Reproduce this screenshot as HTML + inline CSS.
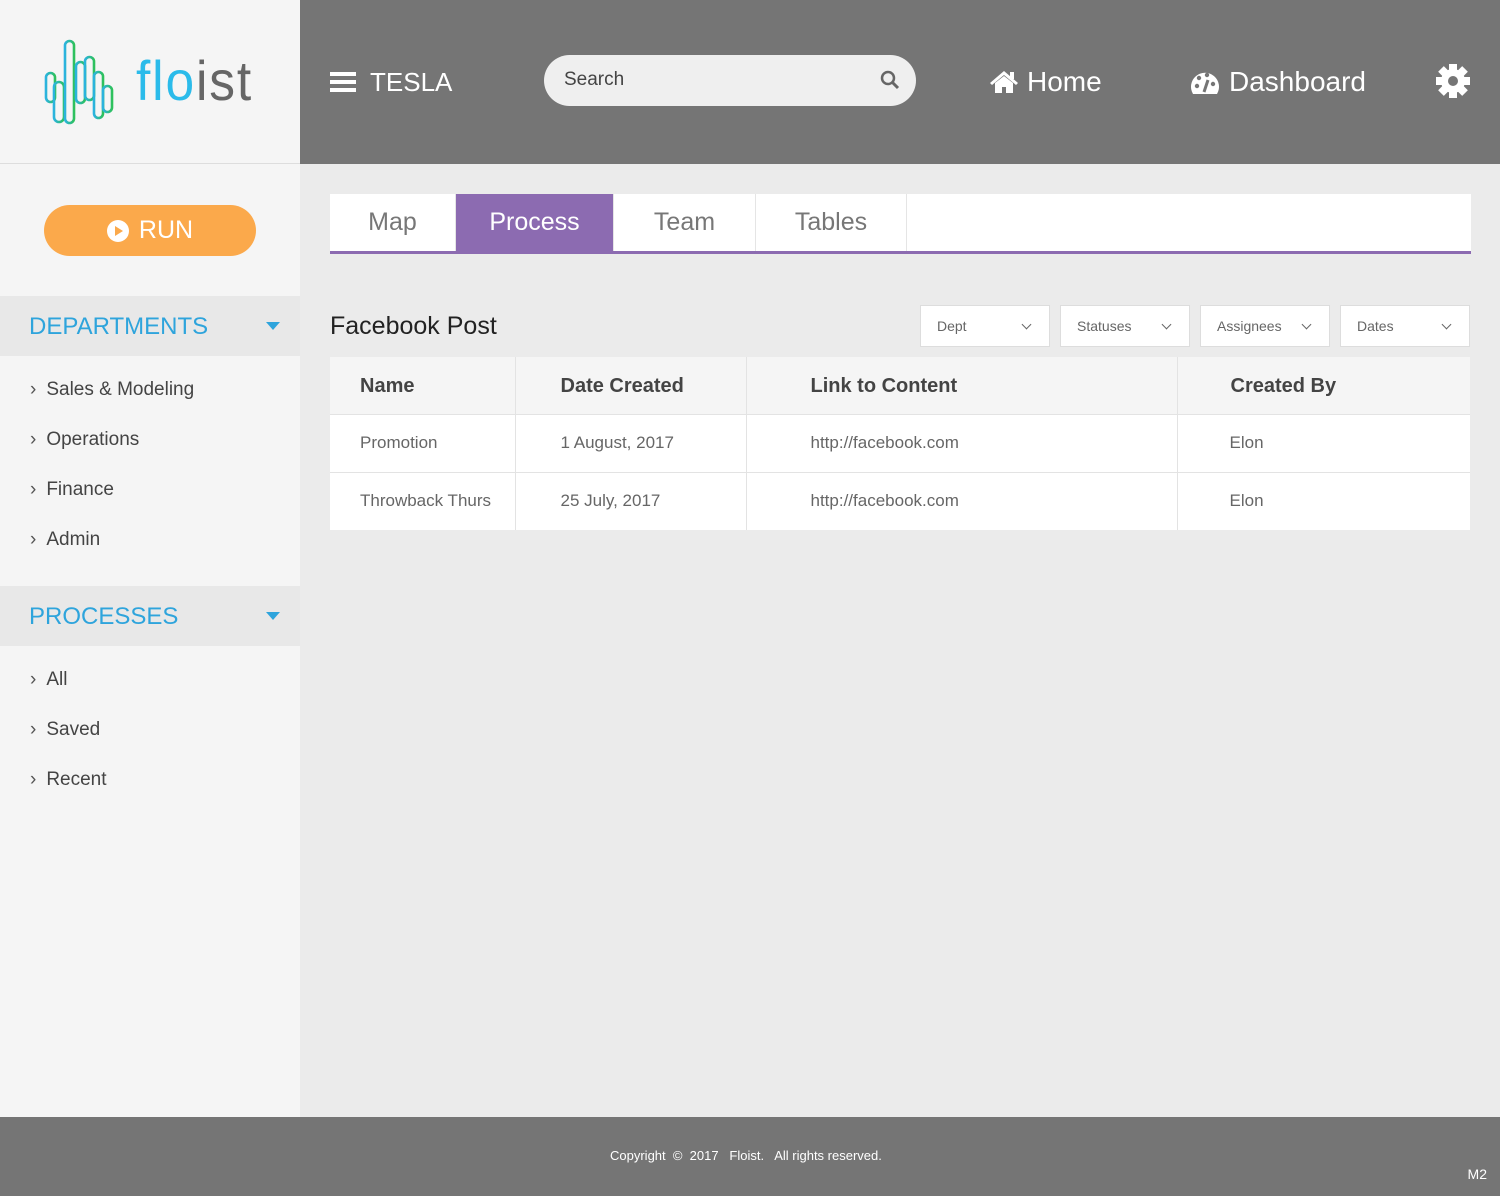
<!DOCTYPE html>
<html><head><meta charset="utf-8"><style>
*{box-sizing:border-box;margin:0;padding:0}
body{width:1500px;height:1196px;background:#ebebeb;font-family:"Liberation Sans","DejaVu Sans",sans-serif;position:relative;overflow:hidden}
.side{position:absolute;left:0;top:0;width:300px;height:1117px;background:#f5f5f5}
.logo{height:164px;border-bottom:1px solid #ddd;position:relative}
.top{position:absolute;left:300px;top:0;width:1200px;height:164px;background:#757575;color:#fff}
.run{position:absolute;left:44px;top:205px;width:212px;height:51px;border-radius:26px;background:#fba94b;color:#fff;font-size:25px;display:flex;align-items:center;justify-content:center;gap:10px}
.sec{position:absolute;left:0;width:300px;height:60px;background:#e8e8e8;color:#2ea4dc;font-size:24px;padding:17px 29px}
.sec:after{content:"";position:absolute;right:20px;top:26px;border:7px solid transparent;border-top:8px solid #2ea4dc;border-bottom:0}
.item{position:absolute;left:30px;font-size:19px;color:#444}
.item:before{content:"›";margin-right:10px;color:#555}
.tabs{position:absolute;left:330px;top:194px;width:1141px;height:60px;background:#fff;border-bottom:3px solid #8c6bb1;display:flex}
.tab{font-size:25px;color:#777;display:flex;align-items:center;justify-content:center;border-right:1px solid #e5e5e5}
.tab.a{background:#8c6bb1;color:#fff}
.dd{position:absolute;top:305px;width:130px;height:42px;background:#fff;border:1px solid #ddd;font-size:14px;color:#666;padding:12px 16px}
.dd:after{content:"";position:absolute;right:19px;top:15px;width:6px;height:6px;border-right:1.5px solid #666;border-bottom:1.5px solid #666;transform:rotate(45deg)}
table{position:absolute;left:330px;top:357px;width:1140px;border-collapse:collapse;background:#fff}
td,th{text-align:left;border-right:1px solid #e3e3e3;font-weight:normal}
th{height:57px;background:#f5f5f5;font-size:20px;color:#444;font-weight:bold;padding-top:2px}
td{height:58px;font-size:17px;color:#666;border-top:1px solid #e3e3e3}
.foot{position:absolute;left:0;top:1117px;width:1500px;height:79px;background:#757575;color:#fff;font-size:13px}
</style></head><body>
<div class="side"><div class="logo">
<svg width="80" height="95" style="position:absolute;left:40px;top:35px" fill="none" stroke-width="2.6">
<defs><linearGradient id="g" x1="0" x2="1" y1="0" y2="0"><stop offset="0" stop-color="#2bb3e0"/><stop offset="1" stop-color="#2ec15a"/></linearGradient></defs>
<g stroke="url(#g)">
<rect x="6" y="38" width="9" height="29" rx="4.5"/>
<rect x="14" y="47" width="10" height="40" rx="5"/>
<rect x="25" y="6" width="9" height="82" rx="4.5"/>
<rect x="36" y="27" width="9" height="41" rx="4.5"/>
<rect x="45" y="22" width="9" height="43" rx="4.5"/>
<rect x="54" y="37" width="9" height="46" rx="4.5"/>
<rect x="63" y="51" width="9" height="26" rx="4.5"/>
</g></svg>
<div style="position:absolute;left:136px;top:48px;font-size:56px;letter-spacing:2px;transform:scaleX(0.92);transform-origin:left"><span style="color:#2bbbea">flo</span><span style="color:#666">ist</span></div>
</div></div>
<div class="top">
<div style="position:absolute;left:30px;top:72px;width:26px;height:20px;border-top:4px solid #fff;border-bottom:4px solid #fff"><div style="margin-top:4px;height:4px;background:#fff"></div></div>
<div style="position:absolute;left:70px;top:67px;font-size:26px">TESLA</div>
<div style="position:absolute;left:244px;top:55px;width:372px;height:51px;border-radius:26px;background:#efefef;color:#444;font-size:19px;padding:14px 20px">Search
<svg width="20" height="20" style="position:absolute;right:16px;top:15px"><circle cx="8" cy="8" r="6" stroke="#666" stroke-width="2.5" fill="none"/><path d="M12 12l6 6" stroke="#666" stroke-width="3"/></svg></div>
<svg width="28" height="24" style="position:absolute;left:690px;top:70px" fill="#fff"><path d="M14 1L0 13l2 2 12-10 12 10 2-2z M5 13v10h7v-6h4v6h7V13L14 6z"/><rect x="20" y="2" width="4" height="7"/></svg>
<div style="position:absolute;left:727px;top:66px;font-size:28px">Home</div>
<svg width="32" height="28" style="position:absolute;left:889px;top:69px"><path d="M4 25A14 14 0 1 1 28 25z" fill="#fff"/><circle cx="8" cy="17" r="2.2" fill="#757575"/><circle cx="10" cy="9" r="2.2" fill="#757575"/><circle cx="18" cy="6" r="2.2" fill="#757575"/><circle cx="24" cy="15" r="2.2" fill="#757575"/><path d="M15 23l4-12" stroke="#757575" stroke-width="3"/></svg>
<div style="position:absolute;left:929px;top:66px;font-size:28px">Dashboard</div>
<svg width="36" height="36" style="position:absolute;left:1135px;top:63px" viewBox="0 0 36 36"><g fill="#fff" transform="translate(18 18)"><circle r="12"/><rect x="-4" y="-17" width="8" height="34"/><rect x="-4" y="-17" width="8" height="34" transform="rotate(45)"/><rect x="-4" y="-17" width="8" height="34" transform="rotate(90)"/><rect x="-4" y="-17" width="8" height="34" transform="rotate(135)"/></g><circle cx="18" cy="18" r="5" fill="#757575"/></svg>
</div>
<div class="run"><svg width="22" height="22"><circle cx="11" cy="11" r="11" fill="#fff"/><path d="M8 6l8 5-8 5z" fill="#fba94b"/></svg>RUN</div>
<div class="sec" style="top:296px">DEPARTMENTS</div>
<div class="item" style="top:379px">Sales &amp; Modeling</div>
<div class="item" style="top:429px">Operations</div>
<div class="item" style="top:479px">Finance</div>
<div class="item" style="top:529px">Admin</div>
<div class="sec" style="top:586px">PROCESSES</div>
<div class="item" style="top:669px">All</div>
<div class="item" style="top:719px">Saved</div>
<div class="item" style="top:769px">Recent</div>
<div class="tabs"><div class="tab" style="width:126px">Map</div><div class="tab a" style="width:158px">Process</div><div class="tab" style="width:142px">Team</div><div class="tab" style="width:151px">Tables</div></div>
<div style="position:absolute;left:330px;top:312px;font-size:25px;color:#222">Facebook Post</div>
<div class="dd" style="left:920px">Dept</div><div class="dd" style="left:1060px">Statuses</div><div class="dd" style="left:1200px">Assignees</div><div class="dd" style="left:1340px">Dates</div>
<table>
<tr><th style="width:185px;padding-left:30px">Name</th><th style="width:231px;padding-left:45px">Date Created</th><th style="width:431px;padding-left:64px">Link to Content</th><th style="padding-left:53px;border-right:0">Created By</th></tr>
<tr><td style="padding-left:30px">Promotion</td><td style="padding-left:45px">1 August, 2017</td><td style="padding-left:64px">http://facebook.com</td><td style="padding-left:52px;border-right:0">Elon</td></tr>
<tr><td style="padding-left:30px">Throwback Thurs</td><td style="padding-left:45px">25 July, 2017</td><td style="padding-left:64px">http://facebook.com</td><td style="padding-left:52px;border-right:0">Elon</td></tr>
</table>
<div class="foot"><div style="position:absolute;left:610px;top:31px">Copyright &nbsp;©&nbsp; 2017 &nbsp; Floist. &nbsp; All rights reserved.</div><div style="position:absolute;right:13px;top:49px;font-size:14px">M2</div></div>
</body></html>
